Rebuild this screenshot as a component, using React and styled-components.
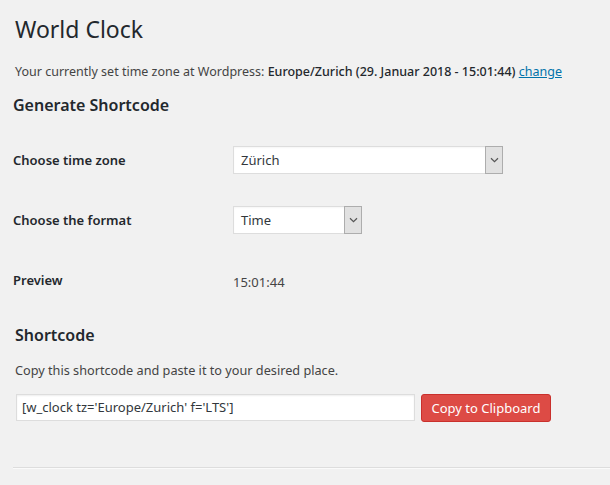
import React from "react";
import styled, { createGlobalStyle } from "styled-components";

const Global = createGlobalStyle`
  html, body {
    margin: 0;
    padding: 0;
    background: #f1f1f1;
  }
  body {
    font-family: "Noto Sans", "Open Sans", sans-serif;
    font-size: 13px;
    color: #23282d;
  }
`;

const Wrap = styled.div`
  padding: 0 0 0 13px;
  width: 597px;
`;

const Title = styled.h1`
  font-size: 23px;
  font-weight: 400;
  line-height: 29px;
  margin: 0;
  padding: 15px 0 0 2px;
  color: #23282d;
`;

const Intro = styled.p`
  margin: 18px 0 0 2px;
  font-size: 12.5px;
  line-height: 20px;
  color: #444;
  strong {
    font-weight: 500;
    color: #23282d;
  }
  a {
    color: #0073aa;
    text-decoration: underline;
  }
`;

const SectionTitle = styled.h2`
  font-size: 16px;
  font-weight: 600;
  line-height: 22px;
  margin: ${(p) => p.$top}px 0 0 ${(p) => p.$left}px;
  color: #23282d;
`;

const Form = styled.div`
  display: flex;
  flex-direction: column;
  margin-top: 14px;
`;

const Row = styled.div`
  display: flex;
  align-items: center;
  height: 60px;
`;

const Label = styled.div`
  width: 220px;
  font-weight: 600;
  font-size: 13px;
  color: #23282d;
  flex-shrink: 0;
`;

const Value = styled.div`
  font-size: 13px;
  color: #444;
  padding-top: 3px;
`;

const Select = styled.div`
  display: flex;
  align-items: stretch;
  width: ${(p) => p.$w}px;
  height: 28px;
  box-sizing: border-box;
  background: #fff;
  border: 1px solid #ddd;
  box-shadow: inset 0 1px 2px rgba(0, 0, 0, 0.04);
`;

const SelectText = styled.div`
  flex: 1;
  display: flex;
  align-items: center;
  padding-left: 7px;
  font-size: 13px;
  color: #32373c;
`;

const Arrow = styled.div`
  width: 16px;
  display: flex;
  align-items: center;
  justify-content: center;
  background: #e1e1e1;
  border: 1px solid #adadad;
  margin: -1px -1px -1px 0;
`;

const Help = styled.p`
  margin: 14px 0 0 2px;
  font-size: 12.7px;
  line-height: 20px;
  color: #444;
`;

const CopyRow = styled.div`
  display: flex;
  align-items: center;
  gap: 6px;
  margin: 12px 0 0 3px;
`;

const CodeInput = styled.div`
  width: 399px;
  height: 27px;
  box-sizing: border-box;
  background: #fff;
  border: 1px solid #ddd;
  box-shadow: inset 0 1px 2px rgba(0, 0, 0, 0.07);
  display: flex;
  align-items: center;
  padding-left: 5px;
  font-size: 13px;
  color: #32373c;
`;

const Button = styled.button`
  height: 28px;
  width: 130px;
  margin-top: 2px;
  border: 1px solid #c9302c;
  border-radius: 3px;
  background: #dd4b45;
  color: #fff;
  font-family: "Noto Sans", "Open Sans", sans-serif;
  font-size: 13px;
  padding: 0;
  cursor: pointer;
`;

const Rule = styled.hr`
  margin: 45px 0 0 0;
  border: 0;
  border-top: 1px solid #ddd;
  border-bottom: 1px solid #fafafa;
  height: 0;
`;

function Chevron() {
  return (
    <svg width="9" height="6" viewBox="0 0 9 6">
      <path d="M1 1.2 L4.5 4.6 L8 1.2" fill="none" stroke="#555" strokeWidth="1.2" />
    </svg>
  );
}

export default function App() {
  return (
    <>
      <Global />
      <Wrap>
        <Title>World Clock</Title>
        <Intro>
          Your currently set time zone at Wordpress:{" "}
          <strong>Europe/Zurich (29. Januar 2018 - 15:01:44)</strong>{" "}
          <a href="#">change</a>
        </Intro>
        <SectionTitle $top={12} $left={0}>
          Generate Shortcode
        </SectionTitle>
        <Form>
          <Row>
            <Label>Choose time zone</Label>
            <Select $w={270}>
              <SelectText>Zürich</SelectText>
              <Arrow>
                <Chevron />
              </Arrow>
            </Select>
          </Row>
          <Row>
            <Label>Choose the format</Label>
            <Select $w={129}>
              <SelectText>Time</SelectText>
              <Arrow>
                <Chevron />
              </Arrow>
            </Select>
          </Row>
          <Row>
            <Label>Preview</Label>
            <Value>15:01:44</Value>
          </Row>
        </Form>
        <SectionTitle $top={14} $left={2}>
          Shortcode
        </SectionTitle>
        <Help>Copy this shortcode and paste it to your desired place.</Help>
        <CopyRow>
          <CodeInput>[w_clock tz='Europe/Zurich' f='LTS']</CodeInput>
          <Button>Copy to Clipboard</Button>
        </CopyRow>
        <Rule />
      </Wrap>
    </>
  );
}
